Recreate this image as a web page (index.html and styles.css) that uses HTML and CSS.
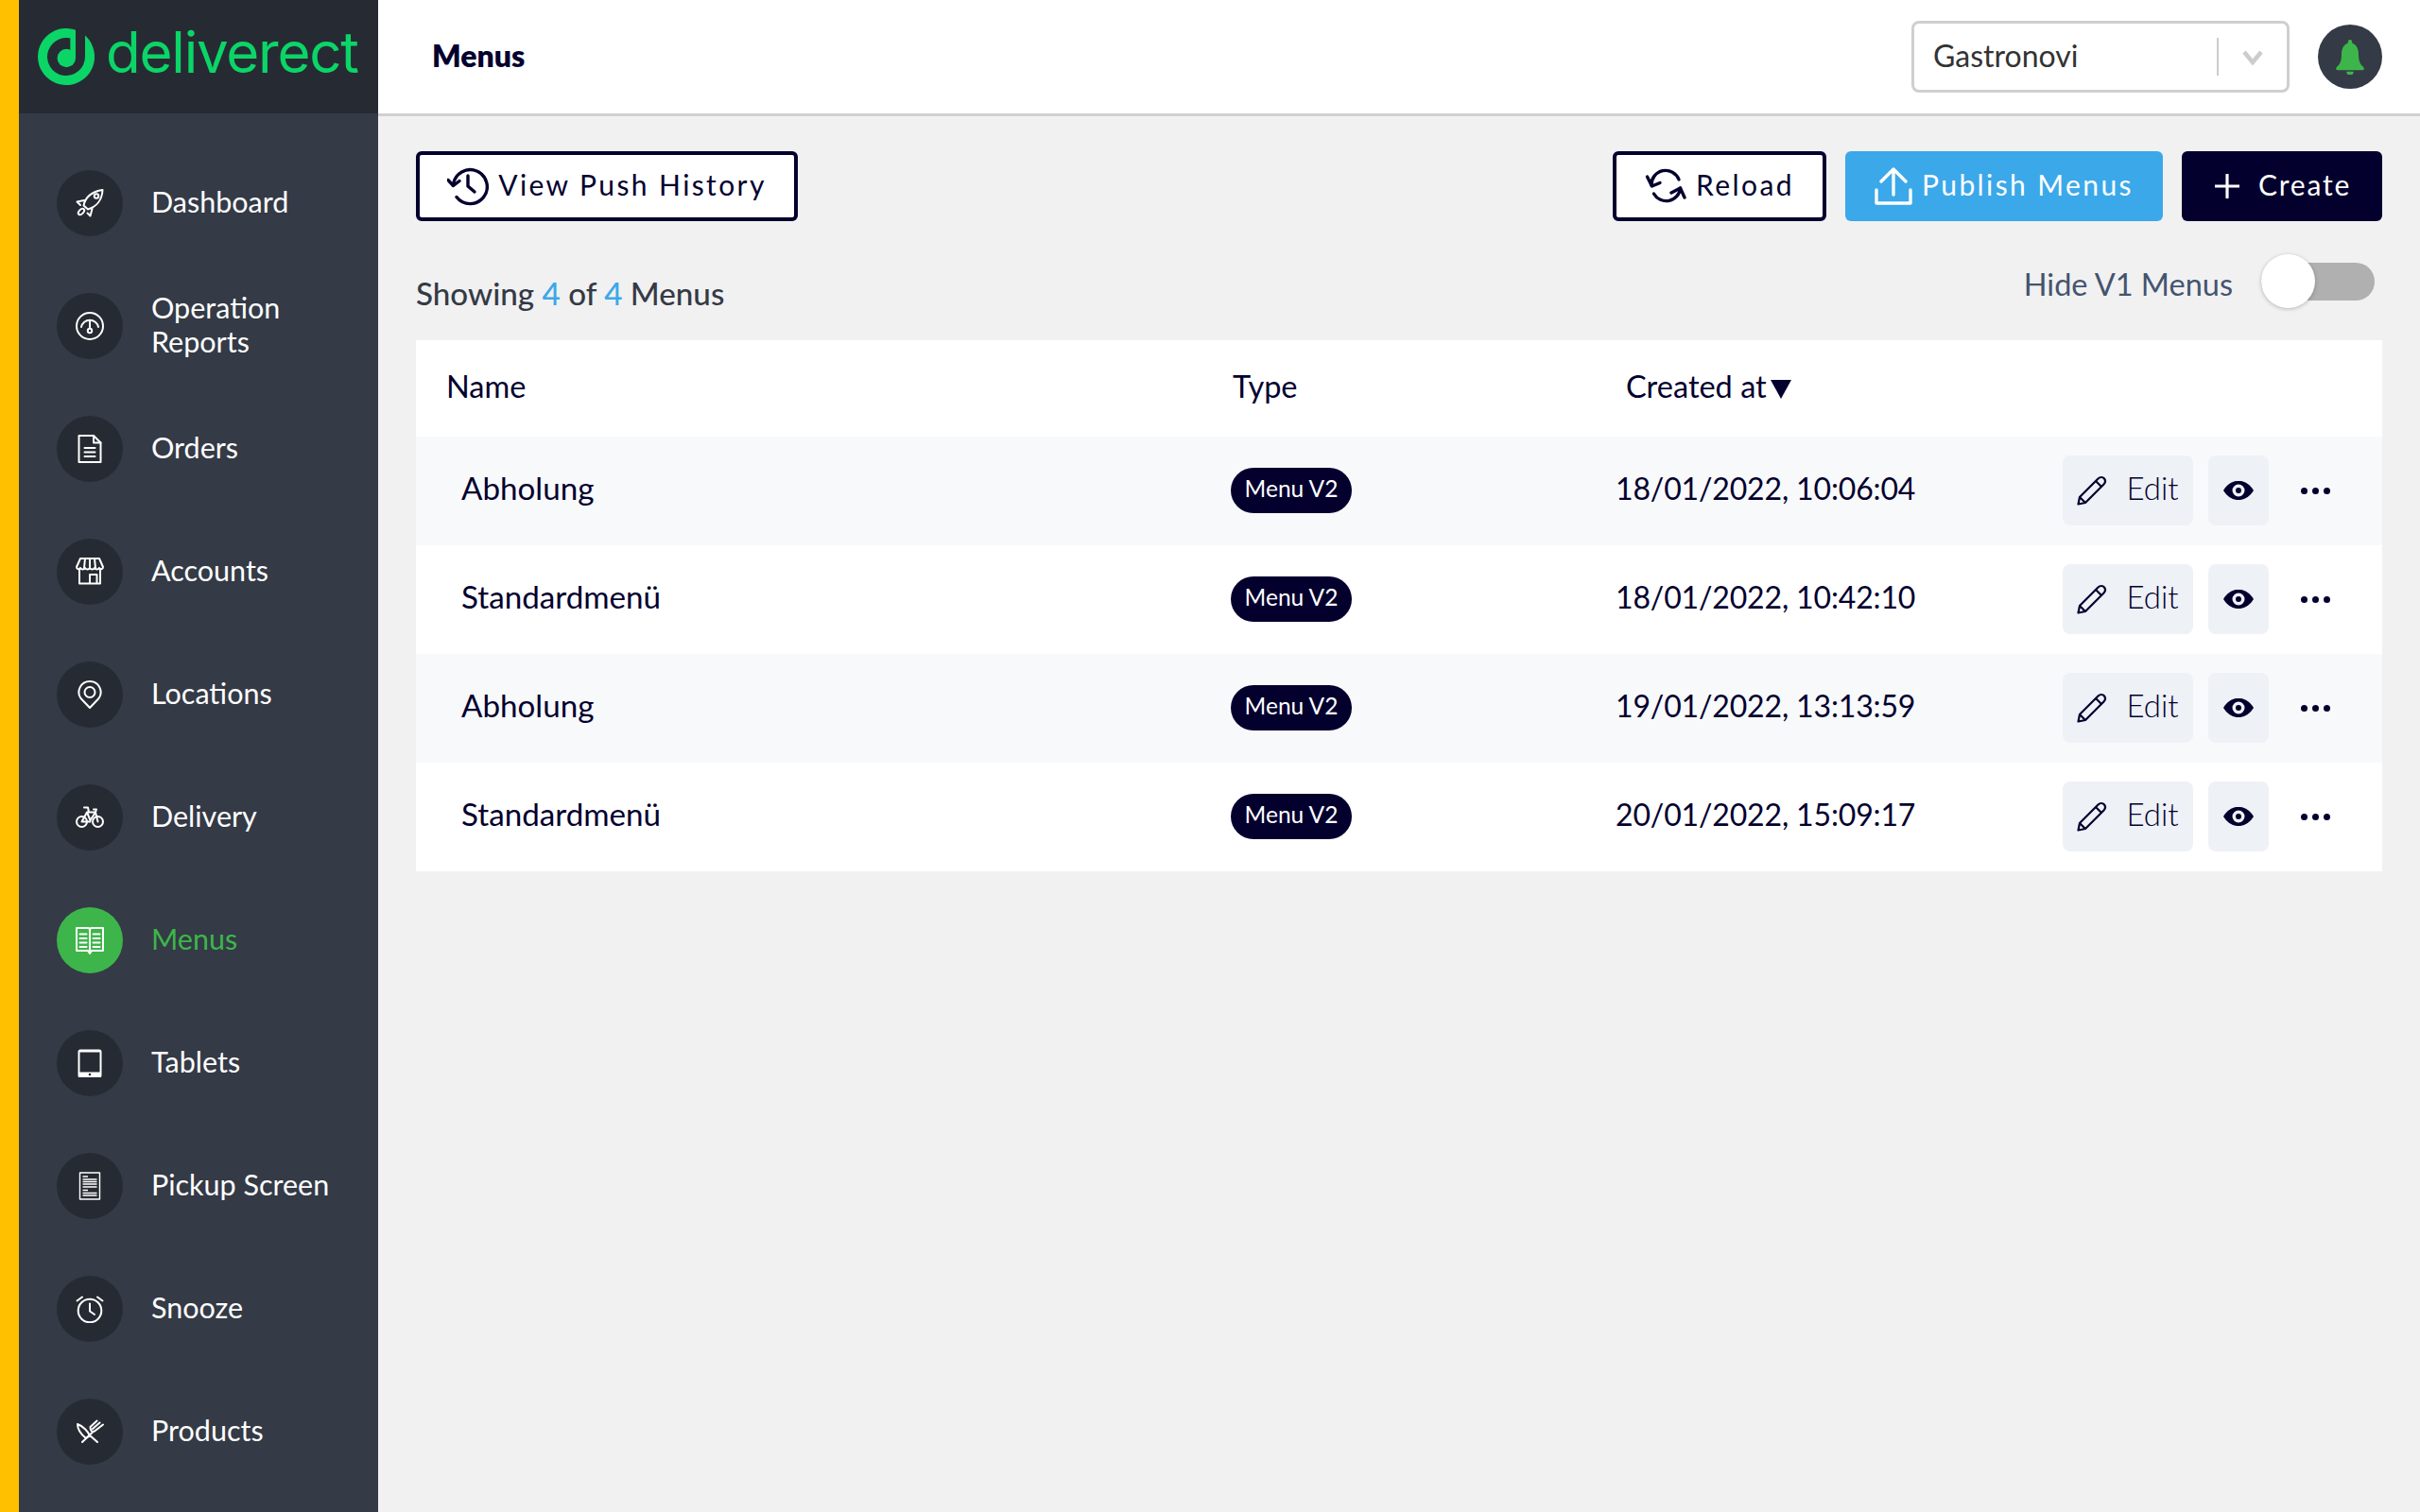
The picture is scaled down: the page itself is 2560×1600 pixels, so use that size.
FILE: index.html
```html
<!DOCTYPE html>
<html lang="en">
<head>
<meta charset="utf-8">
<title>Menus</title>
<link rel="stylesheet" href="styles.css">
</head>
<body>
<aside class="sidebar">
  <div class="brand">
    <svg class="brand-mark" viewBox="0 0 60 60"><path d="M50 7.600A30 30 0 1 1 40 1.700V12.700A20 20 0 1 0 50 30Z"/><path d="M34.300 9.500H40V32H34.300Z"/><circle cx="30.300" cy="31.500" r="9.700"/></svg>
    <span class="brand-name">deliverect</span>
  </div>
  <nav class="nav">
    <a class="nav-item"><span class="nav-ico"><svg viewBox="0 0 30 30"><path d="M8.500 17.500C10 9 17 2.500 28.500 1 28 12 21.500 19 13 21.500Z"/><circle cx="22" cy="7.500" r="2.300"/><path d="M9 12 1.500 13.500 5 17M17.500 21 15.500 28.500 12.500 25.500"/><ellipse cx="6" cy="24" rx="2.300" ry="3.800" transform="rotate(45 6 24)"/></svg></span><span class="nav-label">Dashboard</span></a>
    <a class="nav-item"><span class="nav-ico"><svg viewBox="0 0 30 30"><circle cx="15" cy="15" r="14"/><path d="M6 16A9.200 9.200 0 0 1 24 16"/><path d="M15 9V17"/><circle cx="15" cy="20" r="2.200"/></svg></span><span class="nav-label">Operation<br>Reports</span></a>
    <a class="nav-item"><span class="nav-ico"><svg viewBox="0 0 30 30"><path d="M3.500 1H19L26.500 8.500V29H3.500Z"/><path d="M19 1V8.500H26.500"/><path d="M9.500 14H20.500M9.500 18.500H20.500M9.500 23H20.500"/></svg></span><span class="nav-label">Orders</span></a>
    <a class="nav-item"><span class="nav-ico"><svg viewBox="0 0 30 30"><path d="M5 1H25L29 10C29 12.500 26 13 25 11 24 13 21 13 20 11 19 13 16 13 15 11 14 13 11 13 10 11 9 13 6 13 5 11 4 13 1 12.500 1 10Z"/><path d="M10 1 9 11M15 1V11M20 1 21 11"/><path d="M4 13V27.500H26V13"/><path d="M15 27V18H22.500V27"/></svg></span><span class="nav-label">Accounts</span></a>
    <a class="nav-item"><span class="nav-ico"><svg viewBox="0 0 30 30"><path d="M15 29 5.500 19C.5 12 5 1 15 1S29.500 12 24.500 19Z"/><circle cx="15" cy="12.500" r="5.500"/></svg></span><span class="nav-label">Locations</span></a>
    <a class="nav-item"><span class="nav-ico"><svg viewBox="0 0 30 30"><circle cx="6.500" cy="19.500" r="5.500"/><circle cx="23.500" cy="19.500" r="5.500"/><path d="M6.500 19.500 12 9.500H21L23.500 19.500M12 9.500 15.500 18 21 9.500M6.500 19.500H15.500M9 4.500H13L14 9.500M19 6.500H22L21 9.500"/></svg></span><span class="nav-label">Delivery</span></a>
    <a class="nav-item is-active"><span class="nav-ico"><svg viewBox="0 0 30 30"><path d="M1 2H13C14 2 15 3 15 4 15 3 16 2 17 2H29V26H17L15 29 13 26H1Z"/><path d="M15 4V26"/><path d="M4.500 8.500H11.500M4.500 13H11.500M4.500 17.500H11.500M4.500 22H11.500M18.500 8.500H25.500M18.500 13H25.500M18.500 17.500H25.500M18.500 22H25.500"/></svg></span><span class="nav-label">Menus</span></a>
    <a class="nav-item"><span class="nav-ico"><svg viewBox="0 0 30 30"><rect x="3.500" y="1.500" width="23" height="28" rx="1.500" class="ico-solid-frame"/><rect x="4.500" y="3.500" width="21" height="21" class="ico-screen"/><circle cx="15" cy="27" r="1.300" class="ico-screen"/></svg></span><span class="nav-label">Tablets</span></a>
    <a class="nav-item"><span class="nav-ico ico-thin"><svg viewBox="0 0 30 30"><rect x="4.500" y="1" width="21" height="28"/><path d="M7.500 5H13M7.500 8H22.500M7.500 10.500H22.500M7.500 13H22.500M7.500 16H22.500M7.500 19.500H13M7.500 22.500H22.500M7.500 25H22.500"/></svg></span><span class="nav-label">Pickup Screen</span></a>
    <a class="nav-item"><span class="nav-ico"><svg viewBox="0 0 30 30"><circle cx="15" cy="17" r="12.300"/><path d="M15 9.500V17.500L20 21M1.500 6.500 7 2.500M28.500 6.500 23 2.500"/></svg></span><span class="nav-label">Snooze</span></a>
    <a class="nav-item"><span class="nav-ico"><svg viewBox="0 0 30 30"><path d="M2 7C8 9 13 15 15 19L11 22C6 18 2 12 2 7ZM14 18 23 26"/><path d="M7 26 18 15.500M15.500 10 22.500 3.500M18 12 25.500 5.500M20 14.500 29 7.500M15.500 10C15.500 14 17 15.500 20 14.500"/></svg></span><span class="nav-label">Products</span></a>
  </nav>
</aside>
<div class="main">
  <header class="topbar">
    <h1 class="title">Menus</h1>
    <div class="topbar-right">
      <div class="select">
        <span class="select-value">Gastronovi</span>
        <span class="select-sep"></span>
        <svg class="select-arrow" viewBox="0 0 24 24"><path d="M3 7 12 18 21 7"/></svg>
      </div>
      <span class="bell"><svg viewBox="0 0 34 40"><path d="M17 1C15 1 14.500 3 14.500 5C9 7 7.500 12 7.500 18C7.500 24 6 29 2.500 31C1 32 1 35 3 35H31C33 35 33 32 31.500 31C28 29 26.500 24 26.500 18C26.500 12 25 7 19.500 5C19.500 3 19 1 17 1ZM13 36.500C13 42 21 42 21 36.500Z"/></svg></span>
    </div>
  </header>
  <main class="content">
    <div class="toolbar">
      <button class="btn btn-outline btn-history"><svg class="btn-ico ico-lg" viewBox="0 0 44 44"><path d="M6.500 20A18 18 0 1 1 10 33.500"/><path d="M1 15.500 6.500 21.500 13 16.500"/><path d="M22 11V22L29 28"/></svg><span>View Push History</span></button>
      <div class="toolbar-right">
        <button class="btn btn-outline btn-reload"><svg class="btn-ico ico-lg" viewBox="0 0 44 44"><path d="M7 21A15 15 0 0 1 36 15"/><path d="M2.500 12 7.500 22 16 18.500"/><path d="M37.500 24A15 15 0 0 1 9.500 30"/><path d="M28 29 37.500 24 42 34"/></svg><span>Reload</span></button>
        <button class="btn btn-blue"><svg class="btn-ico ico-xl" viewBox="0 0 40 40"><path d="M20 29V2M7 15 20 2 33 15M2 24V38H38V24"/></svg><span>Publish Menus</span></button>
        <button class="btn btn-navy"><svg class="btn-ico ico-md" viewBox="0 0 28 28"><path d="M14 1V27M1 14H27"/></svg><span>Create</span></button>
      </div>
    </div>
    <div class="meta">
      <p class="count">Showing <b>4</b> of <b>4</b> Menus</p>
      <div class="hide-v1">
        <span class="hide-label">Hide V1 Menus</span>
        <span class="toggle"><span class="toggle-thumb"></span></span>
      </div>
    </div>
    <section class="table">
      <div class="row row-head">
        <span class="c-name">Name</span>
        <span class="c-type">Type</span>
        <span class="c-date">Created at<i class="sort"></i></span>
      </div>
      <div class="row row-odd">
        <span class="c-name cell-name">Abholung</span>
        <span class="c-type"><span class="badge">Menu V2</span></span>
        <span class="c-date cell-date">18/01/2022, 10:06:04</span>
        <div class="actions">
          <a class="act act-edit"><svg viewBox="0 0 32 32"><path d="M1.500 30.500 3 23 22.500 3.500C24.500 1.500 27.500 1.500 29 3.500S30.500 7.500 28.500 9.500L9 29ZM3 23 9 29M20 6 26 12"/></svg><span>Edit</span></a>
          <a class="act act-eye"><svg viewBox="0 0 32 20"><path fill-rule="evenodd" d="M0 10C8-3.500 24-3.500 32 10 24 23.500 8 23.500 0 10ZM16 3.500A6.500 6.500 0 1 0 16 16.500 6.500 6.500 0 1 0 16 3.500ZM16 7A3 3 0 1 1 16 13 3 3 0 1 1 16 7Z"/></svg></a>
          <a class="act-more"><i></i><i></i><i></i></a>
        </div>
      </div>
      <div class="row">
        <span class="c-name cell-name">Standardmenü</span>
        <span class="c-type"><span class="badge">Menu V2</span></span>
        <span class="c-date cell-date">18/01/2022, 10:42:10</span>
        <div class="actions">
          <a class="act act-edit"><svg viewBox="0 0 32 32"><path d="M1.500 30.500 3 23 22.500 3.500C24.500 1.500 27.500 1.500 29 3.500S30.500 7.500 28.500 9.500L9 29ZM3 23 9 29M20 6 26 12"/></svg><span>Edit</span></a>
          <a class="act act-eye"><svg viewBox="0 0 32 20"><path fill-rule="evenodd" d="M0 10C8-3.500 24-3.500 32 10 24 23.500 8 23.500 0 10ZM16 3.500A6.500 6.500 0 1 0 16 16.500 6.500 6.500 0 1 0 16 3.500ZM16 7A3 3 0 1 1 16 13 3 3 0 1 1 16 7Z"/></svg></a>
          <a class="act-more"><i></i><i></i><i></i></a>
        </div>
      </div>
      <div class="row row-odd">
        <span class="c-name cell-name">Abholung</span>
        <span class="c-type"><span class="badge">Menu V2</span></span>
        <span class="c-date cell-date">19/01/2022, 13:13:59</span>
        <div class="actions">
          <a class="act act-edit"><svg viewBox="0 0 32 32"><path d="M1.500 30.500 3 23 22.500 3.500C24.500 1.500 27.500 1.500 29 3.500S30.500 7.500 28.500 9.500L9 29ZM3 23 9 29M20 6 26 12"/></svg><span>Edit</span></a>
          <a class="act act-eye"><svg viewBox="0 0 32 20"><path fill-rule="evenodd" d="M0 10C8-3.500 24-3.500 32 10 24 23.500 8 23.500 0 10ZM16 3.500A6.500 6.500 0 1 0 16 16.500 6.500 6.500 0 1 0 16 3.500ZM16 7A3 3 0 1 1 16 13 3 3 0 1 1 16 7Z"/></svg></a>
          <a class="act-more"><i></i><i></i><i></i></a>
        </div>
      </div>
      <div class="row">
        <span class="c-name cell-name">Standardmenü</span>
        <span class="c-type"><span class="badge">Menu V2</span></span>
        <span class="c-date cell-date">20/01/2022, 15:09:17</span>
        <div class="actions">
          <a class="act act-edit"><svg viewBox="0 0 32 32"><path d="M1.500 30.500 3 23 22.500 3.500C24.500 1.500 27.500 1.500 29 3.500S30.500 7.500 28.500 9.500L9 29ZM3 23 9 29M20 6 26 12"/></svg><span>Edit</span></a>
          <a class="act act-eye"><svg viewBox="0 0 32 20"><path fill-rule="evenodd" d="M0 10C8-3.500 24-3.500 32 10 24 23.500 8 23.500 0 10ZM16 3.500A6.500 6.500 0 1 0 16 16.500 6.500 6.500 0 1 0 16 3.500ZM16 7A3 3 0 1 1 16 13 3 3 0 1 1 16 7Z"/></svg></a>
          <a class="act-more"><i></i><i></i><i></i></a>
        </div>
      </div>
    </section>
  </main>
</div>
</body>
</html>
```
FILE: styles.css
```css
* { box-sizing: border-box; }
html, body { margin: 0; height: 100%; }
body {
  display: flex;
  width: 2560px;
  height: 1600px;
  overflow: hidden;
  background: #f1f1f1;
  border-left: 20px solid #ffc000;
  font-family: "Lato", "Noto Sans", sans-serif;
  color: #03002e;
}

/* Sidebar */
.sidebar { width: 380px; flex: none; background: #343a46; }
.brand {
  height: 120px;
  background: #262b33;
  display: flex;
  align-items: center;
  padding-left: 20px;
  gap: 12px;
}
.brand-mark { width: 60px; height: 60px; flex: none; fill: #0bd567; }
.brand-name {
  font-family: "Inter", sans-serif;
  font-weight: 400;
  font-size: 60px;
  letter-spacing: -1.200px;
  color: #0bd567;
  line-height: 60px;
  padding-bottom: 10px;
}
.nav { display: flex; flex-direction: column; gap: 60px; padding: 60px 0 0 40px; }
.nav-item {
  display: flex;
  align-items: center;
  gap: 30px;
  height: 70px;
  color: #fff;
  font-size: 30.500px;
  line-height: 36px;
}
.nav-label { padding-bottom: 5px; }
.nav-ico {
  width: 70px;
  height: 70px;
  flex: none;
  border-radius: 50%;
  background: #262b33;
  display: flex;
  align-items: center;
  justify-content: center;
}
.nav-ico svg {
  width: 30px;
  height: 30px;
  fill: none;
  stroke: #fff;
  stroke-width: 2;
  stroke-linejoin: round;
  stroke-linecap: round;
}
.nav-ico.ico-thin svg { stroke-width: 1.400; stroke-linecap: butt; }
.ico-solid-frame { fill: #fff; }
.ico-screen { fill: #262b33; stroke: none; }
.is-active { color: #3db54a; }
.is-active .nav-ico { background: #3db54a; }

/* Top bar */
.main { flex: 1; min-width: 0; display: flex; flex-direction: column; }
.topbar {
  height: 120px;
  flex: none;
  background: #fff;
  box-shadow: 0 3px 0 #d0d0d0;
  display: flex;
  align-items: center;
  justify-content: space-between;
  padding: 0 40px 0 57px;
  position: relative;
}
.title { margin: 0; font-size: 32px; font-weight: 800; line-height: 40px; padding-bottom: 3px; }
.topbar-right { display: flex; align-items: center; gap: 30px; }
.select {
  width: 400px;
  height: 76px;
  border: 3px solid #cfcfcf;
  border-radius: 8px;
  background: #fff;
  display: flex;
  align-items: center;
  padding: 0 24px 0 20px;
}
.select-value { flex: 1; font-size: 32px; color: #333; padding-bottom: 3px; }
.select-sep { width: 2px; height: 40px; background: #ccc; }
.select-arrow {
  width: 24px;
  height: 24px;
  margin-left: 24px;
  fill: none;
  stroke: #ccc;
  stroke-width: 4.500;
}
.bell {
  width: 68px;
  height: 68px;
  border-radius: 50%;
  background: #343a46;
  display: flex;
  align-items: center;
  justify-content: center;
}
.bell svg { width: 34px; height: 38px; fill: #3db54a; }

/* Content */
.content { padding: 40px; flex: 1; }
.toolbar { display: flex; justify-content: space-between; height: 74px; }
.toolbar-right { display: flex; gap: 20px; }
.btn {
  height: 74px;
  border-radius: 6px;
  border: 4px solid transparent;
  display: flex;
  align-items: center;
  justify-content: center;
  gap: 10px;
  padding: 0;
  font: inherit;
  font-size: 30px;
  letter-spacing: 2.400px;
  white-space: nowrap;
  cursor: pointer;
}
.btn span { padding-bottom: 4px; }
.btn-outline { background: #fff; border-color: #03002e; color: #03002e; }
.btn-history { width: 404px; }
.btn-reload { width: 226px; }
.btn-blue { background: #3ba8ea; color: #fff; width: 336px; }
.btn-navy { background: #03002e; color: #fff; width: 212px; gap: 20px; letter-spacing: 1.800px; padding-left: 2px; }
.btn-ico { fill: none; stroke: currentColor; stroke-width: 3.400; flex: none; stroke-linecap: round; stroke-linejoin: round; }
.ico-lg { width: 44px; height: 44px; }
.ico-xl { width: 40px; height: 40px; }
.ico-md { width: 26px; height: 26px; }

.meta { display: flex; justify-content: space-between; align-items: flex-start; height: 126px; padding-right: 8px; }
.count { margin: 56px 0 0; font-size: 33.200px; line-height: 40px; color: #343a46; font-weight: 500; }
.count b { color: #3ba8ea; font-weight: 500; }
.hide-v1 { display: flex; align-items: center; gap: 30px; margin-top: 35px; }
.hide-label { font-size: 32.500px; line-height: 40px; color: #44546f; padding-top: 6px; }
.toggle { width: 120px; height: 57px; position: relative; display: flex; align-items: center; }
.toggle::before { content: ""; width: 100%; height: 40px; border-radius: 20px; background: #b0b0b0; }
.toggle-thumb {
  position: absolute;
  left: 0;
  top: 0;
  width: 57px;
  height: 57px;
  border-radius: 50%;
  background: #fff;
  box-shadow: 0 1px 4px rgba(0, 0, 0, .25);
}

/* Table */
.table { background: #fff; }
.row {
  display: grid;
  grid-template-columns: 860px 400px 1fr;
  align-items: center;
  height: 115px;
  position: relative;
}
.row-head { height: 102px; font-size: 32.500px; }
.row-odd { background: #f8f9fb; }
.row-head .c-name { padding-left: 32px; padding-bottom: 5px; }
.c-type { padding-left: 4px; display: flex; }
.row-head .c-type { padding-bottom: 5px; }
.row-head .c-date { padding-left: 20px; display: flex; align-items: center; gap: 4px; line-height: 34px; margin-top: -5px; }
.sort {
  width: 0;
  height: 0;
  margin-top: 6px;
  border-left: 11.500px solid transparent;
  border-right: 11.500px solid transparent;
  border-top: 20px solid #03002e;
}
.cell-name { padding: 0 0 7px 48px; font-size: 33.200px; }
.cell-date { padding: 0 0 7px 9px; font-size: 32px; letter-spacing: -.15px; }
.c-type .badge { margin: -2px 0 0 -2px; }
.badge {
  display: flex;
  align-items: center;
  justify-content: center;
  width: 128px;
  height: 48px;
  border-radius: 24px;
  background: #03002e;
  color: #fff;
  font-size: 24.500px;
  padding-bottom: 5px;
}
.actions {
  position: absolute;
  right: 55px;
  top: 0;
  bottom: 0;
  display: flex;
  align-items: center;
  gap: 16px;
  padding-bottom: 1px;
}
.act {
  height: 74px;
  border-radius: 8px;
  background: #eef1f6;
  display: flex;
  align-items: center;
  justify-content: center;
}
.act-edit { width: 138px; gap: 20px; font-size: 33px; font-weight: 300; }
.act-edit span { padding-bottom: 6px; }
.act-edit svg { width: 32px; height: 32px; fill: none; stroke: #03002e; stroke-width: 2.200; stroke-linejoin: round; }
.act-eye { width: 64px; }
.act-eye svg { width: 32px; height: 20px; fill: #03002e; }
.act-more { display: flex; gap: 5px; margin-left: 18px; }
.act-more i { width: 7px; height: 7px; border-radius: 50%; background: #03002e; }
```
